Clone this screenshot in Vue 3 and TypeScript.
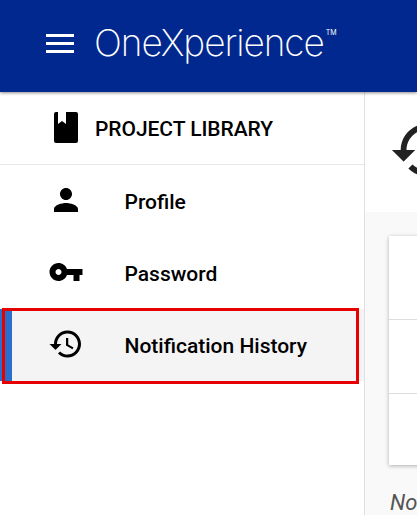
<script setup lang="ts">
interface NavItem {
  label: string
  path: string
  active?: boolean
}
const historyPath =
  'M13 3c-4.97 0-9 4.03-9 9H1l3.89 3.89.07.14L9 12H6c0-3.87 3.13-7 7-7s7 3.13 7 7-3.13 7-7 7c-1.93 0-3.68-.79-4.94-2.06l-1.42 1.42C8.27 19.99 10.51 21 13 21c4.97 0 9-4.03 9-9s-4.03-9-9-9zm-1 5v5l4.28 2.54.72-1.21-3.5-2.08V8H12z'
const items: NavItem[] = [
  { label: 'Profile', path: 'M12 12c2.21 0 4-1.79 4-4s-1.79-4-4-4-4 1.79-4 4 1.79 4 4 4zm0 2c-2.67 0-8 1.34-8 4v2h16v-2c0-2.66-5.33-4-8-4z' },
  { label: 'Password', path: 'M12.65 10C11.83 7.67 9.61 6 7 6c-3.31 0-6 2.69-6 6s2.69 6 6 6c2.61 0 4.83-1.67 5.65-4H17v4h4v-4h2v-4H12.65zM7 14c-1.1 0-2-.9-2-2s.9-2 2-2 2 .9 2 2-.9 2-2 2z' },
  { label: 'Notification History', path: historyPath, active: true },
]
</script>

<template>
  <div class="page">
    <header class="topbar">
      <div class="burger"><span></span><span></span><span></span></div>
      <div class="logo">OneXperience<sup>TM</sup></div>
    </header>
    <div class="body">
      <aside class="side">
        <div class="lib">
          <svg class="lib-icon" viewBox="0 0 24 31" width="24" height="31"><path d="M2 0h2v12l4-3 4 3V0h10a2 2 0 0 1 2 2v27a2 2 0 0 1-2 2H2a2 2 0 0 1-2-2V2a2 2 0 0 1 2-2z" /></svg>
          <span class="label">PROJECT LIBRARY</span>
        </div>
        <nav>
          <div v-for="item in items" :key="item.label" class="item" :class="{ active: item.active }">
            <svg class="icon" viewBox="0 0 24 24" width="36" height="36"><path :d="item.path" /></svg>
            <span class="label">{{ item.label }}</span>
          </div>
        </nav>
        <div class="outline"></div>
      </aside>
      <main class="main">
        <div class="head"><svg viewBox="0 0 24 24" width="70" height="70"><path :d="historyPath" /></svg></div>
        <div class="content">
          <div class="card">
            <div class="row first"></div>
            <div class="row"></div>
            <div class="row"></div>
          </div>
          <p class="note">No</p>
        </div>
      </main>
    </div>
  </div>
</template>

<style>
html, body { margin: 0; overflow: hidden; }
</style>

<style scoped>
.page { width: 417px; height: 515px; overflow: hidden; font-family: Roboto, sans-serif; background: #fff; color: #000; }
.topbar { height: 92px; background: #00288f; display: flex; align-items: center; position: relative; z-index: 1; box-shadow: 0 1px 3px rgba(0,0,0,.45); }
.burger { margin-left: 46px; margin-top: -5px; width: 28px; display: flex; flex-direction: column; gap: 5px; }
.burger span { display: block; height: 3px; background: #fff; }
.logo { margin-left: 20px; margin-top: -7px; color: #fff; font-family: Inter, sans-serif; font-weight: 250; font-size: 37px; letter-spacing: -1.05px; line-height: 44px; white-space: nowrap; }
.logo sup { font-size: 7px; letter-spacing: 0; vertical-align: 21px; line-height: 0; font-weight: 400; margin-left: 2px; }
.body { display: flex; height: 423px; }
.side { width: 364px; flex: none; border-right: 1px solid #e0e0e0; position: relative; }
.lib { height: 72px; border-bottom: 1px solid #e8e8e8; display: flex; align-items: center; padding-left: 54px; gap: 17px; font-size: 21px; font-weight: 500; letter-spacing: -.05px; }
.label { padding-top: 2px; }
.lib-icon { fill: #000; margin-top: -1px; }
.item { height: 72px; display: flex; align-items: center; font-size: 21px; font-weight: 500; }
.item .icon { margin-left: 48px; margin-right: 40.5px; fill: #000; flex: none; margin-top: -2px; }
.item.active { background: #f4f4f4; box-shadow: inset 12px 0 0 #2a6fcb; }
.outline { position: absolute; left: 2px; top: 216px; width: 351px; height: 70px; border: 3px solid #e60000; }
.main { flex: 1; min-width: 0; overflow: hidden; display: flex; flex-direction: column; }
.head { height: 120px; flex: none; display: flex; align-items: center; padding-left: 24px; }
.head svg { flex: none; fill: #222; margin-top: -4px; }
.content { flex: 1; background: #f9f9f9; padding: 24px 0 0 24px; }
.card { width: 200px; height: 229px; background: #fff; box-shadow: 0 1px 4px rgba(0,0,0,.3); }
.row { height: 73px; border-top: 1px solid #ddd; }
.row.first { height: 83px; border-top: 0; }
.note { margin: 24px 0 0 1px; font-style: italic; font-size: 22px; color: #555; line-height: 28px; }
</style>
